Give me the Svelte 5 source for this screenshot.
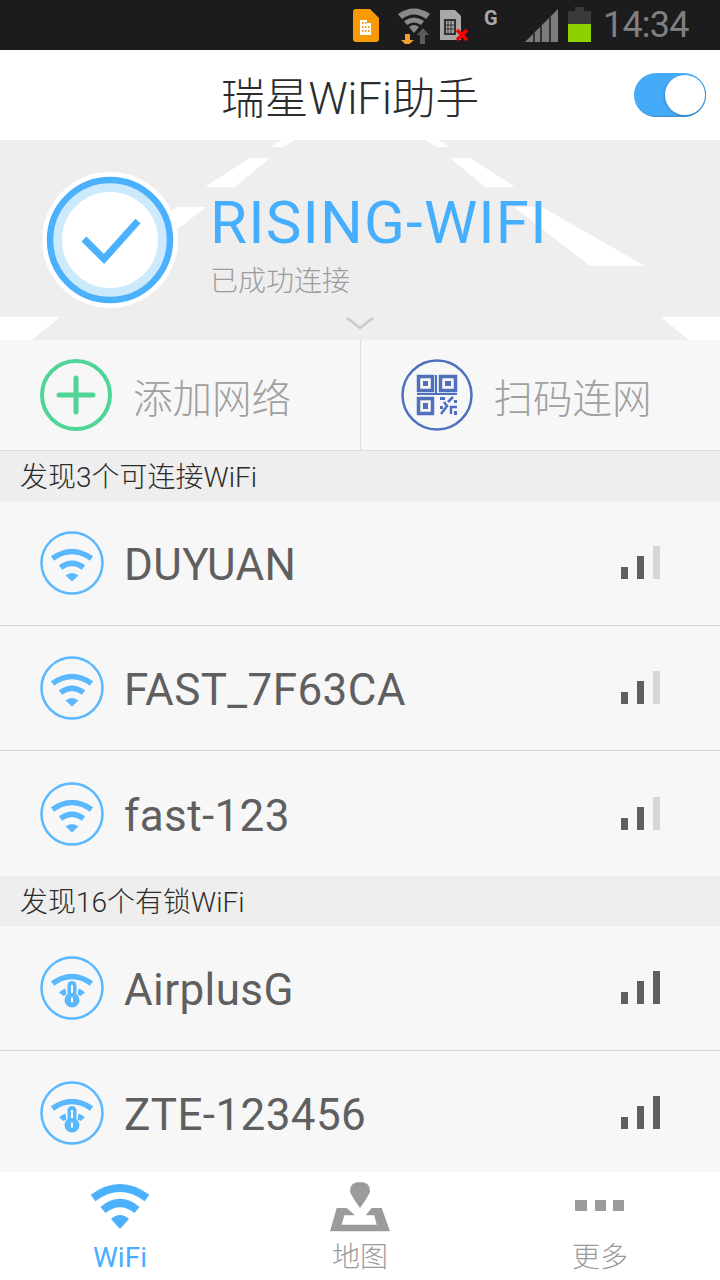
<script>
  const open = ['DUYUAN', 'FAST_7F63CA', 'fast-123'];
  const locked = ['AirplusG', 'ZTE-123456'];
</script>

<div class="page">
  <div class="status">
    <svg class="sim-app" viewBox="0 0 26 33">
      <path d="M3 0H17L26 9V30Q26 33 23 33H3Q0 33 0 30V3Q0 0 3 0Z" fill="#f79a06" />
      <path d="M7 11H14V14H18V26H7Z" fill="#fff" />
      <path d="M9 13h1.500v2H9zM12 13h1.500v2H12zM9 17h1.500v2H9zM12 17h1.500v2H12zM15 17h1.500v2H15zM9 21h1.500v2H9zM12 21h1.500v2H12zM15 21h1.500v2H15z" fill="#f79a06" />
    </svg>
    <svg class="wifi-st" viewBox="0 0 34 38">
      <path d="M1 8Q17 -3 33 8L29 13Q17 4 5 13Z" fill="#8a8a8a" />
      <path d="M7 15Q17 8 27 15L24 19Q17 14 10 19Z" fill="#8a8a8a" />
      <path d="M12 21Q17 17 22 21L17 27Z" fill="#8a8a8a" />
      <path d="M23 38V29H20L26 22 32 29H28V38Z" fill="#5c5c5c" />
      <path d="M8 28H13V34H17L10 40 4 34H8Z" fill="#f0a030" />
    </svg>
    <svg class="sim-st" viewBox="0 0 29 31">
      <path d="M0 0H15L21 6V30H0Z" fill="#a8a8a8" />
      <path d="M4 9H16V25H4Z" fill="#333" />
      <path d="M6 11H14V23H6Z" fill="#a8a8a8" />
      <path d="M8 11V23M11 11V23M6 15H14M6 19H14" stroke="#333" stroke-width="1" />
      <path d="M17 20L27 30M27 20L17 30" stroke="#f00" stroke-width="3.500" />
    </svg>
    <span class="g">G</span>
    <svg class="signal" viewBox="0 0 33 33">
      <path d="M0 33L33 0V33Z" fill="#7c7c7c" />
      <path d="M9 33V24M16 33V17M25 33V8" stroke="#1c1c1c" stroke-width="1.500" />
    </svg>
    <div class="battery">
      <div class="nub"></div>
      <div class="cell"><div class="charge"></div></div>
    </div>
    <span class="time">14:34</span>
  </div>

  <header>
    <h1>瑞星WiFi助手</h1>
    <div class="toggle"><div class="knob"></div></div>
  </header>

  <section class="banner">
    <svg class="road" viewBox="0 0 720 200">
      <path d="M270 7L282 0H295L283 7ZM450 7L438 0H425L437 7ZM205 47L250 18H270L235 47ZM515 47L470 18H450L485 47Z" fill="#fff" />
      <path d="M178 67H206L130 126H75ZM542 67H514L590 126H645Z" fill="#fff" />
      <path d="M0 177H60L32 200H0ZM720 177H661L689 200H720Z" fill="#fff" />
    </svg>
    <svg class="check" viewBox="0 0 136 136">
      <circle cx="68" cy="68" r="68" fill="#fff" />
      <circle cx="68" cy="68" r="55" fill="#fff" stroke="#cdeafd" stroke-width="14" />
      <circle cx="68" cy="68" r="60" fill="none" stroke="#4cb1fd" stroke-width="6.500" />
      <path d="M42 67L62 87 96 49" fill="none" stroke="#4cb1fd" stroke-width="7" />
    </svg>
    <div class="ssid">
      <div class="name">RISING-WIFI</div>
      <div class="state">已成功连接</div>
    </div>
    <svg class="chevron" viewBox="0 0 28 13">
      <path d="M1 1L14 11 27 1" fill="none" stroke="#c9c9c9" stroke-width="2.500" />
    </svg>
  </section>

  <div class="actions">
    <div class="action">
      <svg class="round" viewBox="0 0 72 72">
        <circle cx="36" cy="36" r="34" fill="none" stroke="#4fd597" stroke-width="4" />
        <path d="M19 36H53M36 19V53" stroke="#4fd597" stroke-width="5" stroke-linecap="round" />
      </svg>
      <span>添加网络</span>
    </div>
    <div class="action">
      <svg class="round" viewBox="0 0 72 72">
        <circle cx="36" cy="36" r="34.500" fill="none" stroke="#4f71bd" stroke-width="2.500" />
        <g fill="none" stroke="#4f71bd">
          <path d="M16 35H56M35 16V35" stroke-width="2" />
          <path d="M17.500 17.500H31.500V31.500H17.500ZM39.500 17.500H54.500V31.500H39.500ZM17.500 39.500H31.500V54.500H17.500Z" stroke-width="3.500" />
          <path d="M40 55L46 47 43 43M47 43L52 38M50 55V48H56" stroke-width="2.500" />
        </g>
        <path d="M22 22h5v5h-5zM44 22h6v5h-6zM22 44h5v6h-5zM39 38h5v3h-5zM53 41h3v3h-3zM39 47h3v3h-3zM53 52h3v4h-3z" fill="#4f71bd" />
      </svg>
      <span>扫码连网</span>
    </div>
  </div>

  <main>
    <div class="group">发现3个可连接WiFi</div>
    {#each open as name}
      <div class="row">
        <svg class="round small" viewBox="0 0 64 64">
          <circle cx="32" cy="32" r="30.500" fill="none" stroke="#5ab8ff" stroke-width="2.500" />
          <path d="M12.500 27.500Q32 13.500 51.500 27.500M20.500 36.500Q32 28 43.500 36.500" fill="none" stroke="#5ab8ff" stroke-width="5.500" />
          <path d="M25.500 44.500Q32 39.500 38.500 44.500L32 50.500Z" fill="#5ab8ff" />
        </svg>
        <span class="label">{name}</span>
        <div class="bars"><i class="b1"></i><i class="b2"></i><i class="b3 off"></i></div>
      </div>
    {/each}
    <div class="group">发现16个有锁WiFi</div>
    {#each locked as name}
      <div class="row">
        <svg class="round small" viewBox="0 0 64 64">
          <circle cx="32" cy="32" r="30.500" fill="none" stroke="#5ab8ff" stroke-width="2.500" />
          <path d="M12.500 27.500Q32 13.500 51.500 27.500" fill="none" stroke="#5ab8ff" stroke-width="5.500" />
          <path d="M19 36.500Q22 33.500 25.500 32.500L26.500 38.500 23.500 40ZM45 36.500Q42 33.500 38.500 32.500L37.500 38.500 40.500 40Z" fill="#5ab8ff" />
          <rect x="27.500" y="25" width="9" height="15" rx="4.500" fill="#5ab8ff" />
          <circle cx="32" cy="44" r="7.500" fill="#5ab8ff" />
          <path d="M32 29V37M32 41.500V46.500" stroke="#fff" stroke-width="2" />
        </svg>
        <span class="label">{name}</span>
        <div class="bars"><i class="b1"></i><i class="b2"></i><i class="b3"></i></div>
      </div>
    {/each}
  </main>

  <nav>
    <div class="tab active">
      <svg viewBox="0 0 60 46">
        <path d="M3 14Q30 -6 57 14M13 26Q30 12 47 26" fill="none" stroke="#4cb1fd" stroke-width="8" />
        <path d="M21 35Q30 27 39 35L30 45Z" fill="#4cb1fd" />
      </svg>
      <span>WiFi</span>
    </div>
    <div class="tab">
      <svg viewBox="0 0 60 52">
        <path d="M30 27Q20 13 20 10 20 1 30 1 40 1 40 10 40 13 30 27Z" fill="#9b9b9b" />
        <path d="M6.700 27H16.700L25 34.300H14.300L11.700 43.700H46.700L44.300 34.300H35.700L41.700 27H51.700L60 50.300H0Z" fill="#9b9b9b" />
      </svg>
      <span>地图</span>
    </div>
    <div class="tab">
      <svg viewBox="0 0 60 46">
        <path d="M5 16h12v11H5zM25 16h11v11H25zM43 16h11v11H43z" fill="#9b9b9b" />
      </svg>
      <span>更多</span>
    </div>
  </nav>
</div>

<style>
  :global(body) {
    margin: 0;
  }
  .page {
    width: 720px;
    height: 1280px;
    display: flex;
    flex-direction: column;
    overflow: hidden;
    font-family: Roboto, "Noto Sans CJK SC", sans-serif;
    background: #f7f7f7;
  }
  .status {
    height: 50px;
    flex: none;
    background: #1c1c1c;
    display: flex;
    align-items: flex-start;
    padding-left: 353px;
    box-sizing: border-box;
  }
  .sim-app {
    width: 26px;
    height: 33px;
    margin-top: 9px;
  }
  .wifi-st {
    width: 34px;
    height: 38px;
    margin: 6px 0 0 18px;
  }
  .sim-st {
    width: 29px;
    height: 31px;
    margin: 10px 0 0 9px;
  }
  .g {
    width: 14px;
    margin: 6px 0 0 15px;
    font-size: 20px;
    font-weight: 700;
    color: #a8a8a8;
  }
  .signal {
    width: 33px;
    height: 33px;
    margin: 9px 0 0 27px;
  }
  .battery {
    width: 23px;
    margin: 7px 0 0 10px;
  }
  .nub {
    width: 9px;
    height: 4px;
    margin: 0 auto;
    background: #3a3a3a;
  }
  .cell {
    height: 31px;
    background: #3a3a3a;
    display: flex;
    align-items: flex-end;
  }
  .charge {
    width: 100%;
    height: 18px;
    background: #8fd100;
  }
  .time {
    margin: 4px 0 0 12px;
    font-size: 36px;
    letter-spacing: -0.800px;
    color: #808080;
  }
  header {
    height: 90px;
    flex: none;
    background: #fff;
    display: flex;
    align-items: center;
    justify-content: space-between;
    padding: 0 14px 0 221px;
    box-sizing: border-box;
  }
  h1 {
    margin: 0;
    font-size: 43.700px;
    font-weight: 300;
    color: #2c2c2c;
  }
  .toggle {
    width: 72px;
    height: 44px;
    border-radius: 22px;
    background: #45aaf8;
    box-shadow: inset -1px -1px 1px #3a8ccc;
    display: flex;
    align-items: center;
    justify-content: flex-end;
    padding-right: 1px;
    box-sizing: border-box;
  }
  .knob {
    width: 40px;
    height: 40px;
    border-radius: 50%;
    background: #fff;
    box-shadow: -1px 1px 2px rgba(0, 0, 0, 0.15);
  }
  .banner {
    position: relative;
    height: 200px;
    flex: none;
    background: #eee;
    display: flex;
    align-items: center;
    padding-left: 42px;
    box-sizing: border-box;
  }
  .road {
    position: absolute;
    inset: 0;
    width: 720px;
    height: 200px;
  }
  .check {
    position: relative;
    width: 136px;
    height: 136px;
    flex: none;
  }
  .ssid {
    position: relative;
    margin: 8px 0 0 32px;
  }
  .name {
    font-size: 60px;
    letter-spacing: 1.200px;
    line-height: 70px;
    color: #45aeff;
    white-space: nowrap;
  }
  .state {
    margin-top: 6px;
    font-size: 28px;
    font-weight: 300;
    line-height: 36px;
    color: #9c9c9c;
  }
  .chevron {
    position: absolute;
    left: 346px;
    bottom: 10px;
    width: 28px;
    height: 13px;
  }
  .actions {
    height: 111px;
    flex: none;
    display: flex;
    border-bottom: 1px solid #ddd;
    box-sizing: border-box;
  }
  .action {
    flex: 1;
    display: flex;
    align-items: center;
    gap: 21px;
    padding-left: 40px;
    font-size: 39.500px;
    font-weight: 300;
    color: #a0a0a0;
  }
  .action:first-child {
    border-right: 1px solid #ddd;
  }
  .round {
    width: 72px;
    height: 72px;
    flex: none;
  }
  .round.small {
    width: 64px;
    height: 64px;
  }
  main {
    flex: 1;
    min-height: 0;
    overflow: hidden;
  }
  .group {
    height: 50px;
    padding-left: 20px;
    background: #eee;
    font-size: 28px;
    font-weight: 300;
    line-height: 54px;
    color: #2c2c2c;
  }
  .row {
    height: 125px;
    display: flex;
    align-items: center;
    padding: 0 60px 0 40px;
    border-bottom: 1px solid #d9d9d9;
    box-sizing: border-box;
  }
  .row:has(+ .group) {
    border-bottom: none;
  }
  .label {
    flex: 1;
    margin: 4px 0 0 20px;
    font-size: 44px;
    letter-spacing: 0.400px;
    color: #5f5f5f;
  }
  .bars {
    display: flex;
    align-items: flex-end;
    gap: 9px;
    margin-bottom: 1px;
  }
  .bars i {
    width: 7px;
    background: #5f5f5f;
  }
  .b1 {
    height: 12px;
  }
  .b2 {
    height: 23px;
  }
  .b3 {
    height: 33px;
  }
  .bars .off {
    background: #d5d6d6;
  }
  nav {
    height: 108px;
    flex: none;
    background: #fff;
    display: flex;
  }
  .tab {
    flex: 1;
    display: flex;
    flex-direction: column;
    align-items: center;
    padding-top: 9px;
    font-size: 28px;
    font-weight: 300;
    color: #9b9b9b;
  }
  .tab svg {
    width: 60px;
    height: 52px;
  }
  .tab span {
    margin-top: 7px;
    line-height: 36px;
  }
  .tab.active {
    color: #45aeff;
    font-weight: 400;
  }
</style>
